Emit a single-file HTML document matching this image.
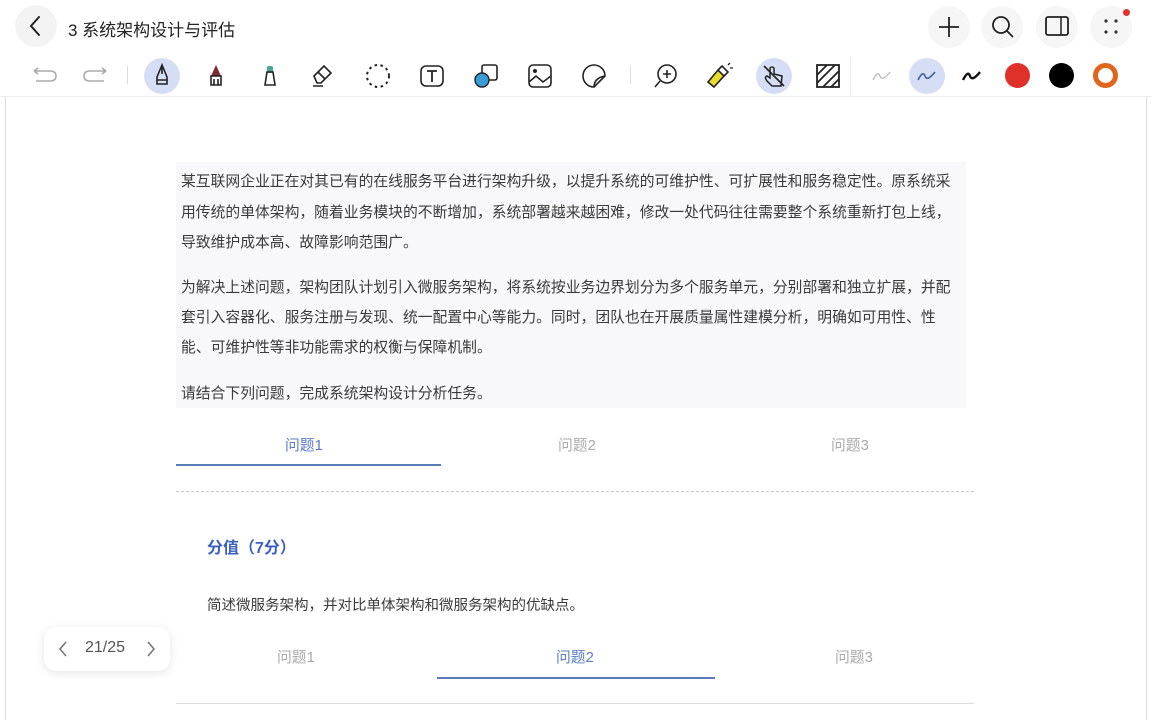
<!DOCTYPE html>
<html><head><meta charset="utf-8"><style>
*{margin:0;padding:0;box-sizing:border-box}
body{width:1152px;height:720px;overflow:hidden;background:#fff;font-family:"Liberation Sans","Noto Sans CJK SC",sans-serif;position:relative;color:#333}
.abs{position:absolute}
.circ{position:absolute;border-radius:50%;background:#f0f0f2}
.t{position:absolute;white-space:nowrap;font-size:14.8px;color:#3a3a3a}
svg{position:absolute}
</style></head><body>
<div class="circ" style="left:15px;top:5px;width:42px;height:42px;background:#f3f3f4"></div>
<svg style="left:26px;top:14px" width="20" height="24"><path d="M13 3 L5 12 L13 21" fill="none" stroke="#222" stroke-width="2" stroke-linecap="round"/></svg>
<div class="t" style="left:68px;top:16px;font-size:17px;color:#222">3 系统架构设计与评估</div>
<div class="circ" style="left:928px;top:6px;width:42px;height:42px;background:#f6f6f6"></div>
<div class="circ" style="left:981px;top:6px;width:42px;height:42px;background:#f6f6f6"></div>
<div class="circ" style="left:1036px;top:6px;width:42px;height:42px;background:#f6f6f6"></div>
<div class="circ" style="left:1090px;top:6px;width:42px;height:42px;background:#f6f6f6"></div>
<svg style="left:937px;top:15px" width="24" height="24"><path d="M12 2V22M2 12H22" stroke="#222" stroke-width="1.8"/></svg>
<svg style="left:990px;top:14px" width="26" height="26"><circle cx="11" cy="11" r="8" fill="none" stroke="#222" stroke-width="1.8"/><path d="M17 17L23 23" stroke="#222" stroke-width="1.8"/></svg>
<svg style="left:1044px;top:15px" width="28" height="24"><rect x="2" y="2" width="22" height="18" rx="2" fill="none" stroke="#222" stroke-width="1.8"/><path d="M17 2V20" stroke="#222" stroke-width="1.5"/></svg>
<svg style="left:1100px;top:15px" width="24" height="24"><circle cx="6" cy="6" r="1.6" fill="#333"/><circle cx="16" cy="6" r="1.6" fill="#333"/><circle cx="6" cy="17" r="1.6" fill="#333"/><circle cx="16" cy="17" r="1.6" fill="#333"/></svg>
<div class="abs" style="left:1123px;top:9px;width:7px;height:7px;border-radius:50%;background:#e03030"></div>
<div class="abs" style="left:0;top:55px;width:1152px;height:42px;border-bottom:1px solid #eee"></div>
<svg style="left:30px;top:66px" width="80" height="20"><path d="M4 5H20Q26 5 26 10Q26 15 20 15H6M4 5L8 2M4 5L8 8" fill="none" stroke="#aaa" stroke-width="1.5"/><path d="M76 5H60Q54 5 54 10Q54 15 60 15H74M76 5L72 2M76 5L72 8" fill="none" stroke="#aaa" stroke-width="1.5"/></svg>
<div class="abs" style="left:127px;top:66px;width:1px;height:18px;background:#ddd"></div>
<div class="circ" style="left:144px;top:58px;width:36px;height:36px;background:#d5def5"></div>
<svg style="left:150px;top:62px" width="24" height="28"><path d="M12 3L7 15V22H17V15Z M7 18H17 M12 3V12" fill="none" stroke="#222" stroke-width="1.6"/></svg>
<svg style="left:204px;top:62px" width="24" height="28"><path d="M12 3L7 14H17Z" fill="#7a2a30"/><path d="M7 14V23H17V14Z M10 17V23M14 17V23" fill="none" stroke="#222" stroke-width="1.6"/></svg>
<svg style="left:258px;top:62px" width="24" height="28"><rect x="9" y="4" width="6" height="7" rx="2" fill="#4aa592"/><path d="M9 10L7 23H17L15 10Z" fill="none" stroke="#222" stroke-width="1.6"/></svg>
<svg style="left:308px;top:62px" width="28" height="28"><path d="M6 14L16 4L23 11L13 21H9Z M10 10L17 17 M5 24H15" fill="none" stroke="#222" stroke-width="1.6"/></svg>
<svg style="left:364px;top:62px" width="28" height="28"><circle cx="14" cy="14" r="11" fill="none" stroke="#222" stroke-width="2" stroke-dasharray="2.5 3.5"/></svg>
<svg style="left:418px;top:62px" width="28" height="28"><rect x="3" y="4" width="22" height="20" rx="5" fill="none" stroke="#222" stroke-width="1.6"/><path d="M9 9H19M14 9V20" stroke="#222" stroke-width="1.8"/></svg>
<svg style="left:472px;top:62px" width="28" height="28"><rect x="10" y="3" width="15" height="15" rx="2" fill="none" stroke="#222" stroke-width="1.6"/><circle cx="10" cy="18" r="7" fill="#3b9bd4" stroke="#222" stroke-width="1.4"/></svg>
<svg style="left:526px;top:62px" width="28" height="28"><rect x="3" y="3" width="22" height="22" rx="4" fill="none" stroke="#222" stroke-width="1.6"/><circle cx="9" cy="9" r="2" fill="#222"/><path d="M3 20L10 14L17 20L25 14" fill="none" stroke="#222" stroke-width="1.6"/></svg>
<svg style="left:580px;top:62px" width="28" height="28"><path d="M25 14A11 11 0 1 0 14 25L25 14Z M14 25Q14 16 25 14" fill="none" stroke="#222" stroke-width="1.6"/></svg>
<div class="abs" style="left:630px;top:66px;width:1px;height:18px;background:#ddd"></div>
<svg style="left:652px;top:62px" width="28" height="28"><circle cx="15" cy="12" r="9" fill="none" stroke="#222" stroke-width="1.6"/><path d="M15 8V16M11 12H19M8 19L3 25" stroke="#222" stroke-width="1.6"/></svg>
<svg style="left:704px;top:62px" width="30" height="28"><path d="M4 20L14 8L20 14L10 25Z" fill="#e8dc2c" stroke="#222" stroke-width="1.6"/><path d="M14 8L18 4L24 10L20 14" fill="none" stroke="#222" stroke-width="1.6"/><path d="M24 3L26 1M26 6L29 6" stroke="#222" stroke-width="1.3"/></svg>
<div class="circ" style="left:756px;top:58px;width:36px;height:36px;background:#d5def5"></div>
<svg style="left:760px;top:62px" width="28" height="28"><path d="M10 6V16L7 14Q4 15 7 19L12 24H21L22 14L14 12V6Q12 4 10 6Z" fill="none" stroke="#222" stroke-width="1.5"/><path d="M4 4L24 24" stroke="#222" stroke-width="1.6"/></svg>
<svg style="left:814px;top:62px" width="28" height="28"><rect x="3" y="3" width="22" height="22" fill="none" stroke="#222" stroke-width="1.8"/><path d="M3 13L13 3M3 21L21 3M9 25L25 9M17 25L25 17" stroke="#222" stroke-width="1.8"/></svg>
<div class="abs" style="left:850px;top:57px;width:1px;height:38px;background:#eee"></div>
<svg style="left:870px;top:66px" width="24" height="20"><path d="M3 14Q8 4 10 10Q12 16 20 6" fill="none" stroke="#bbb" stroke-width="1.3"/></svg>
<div class="circ" style="left:909px;top:58px;width:36px;height:36px;background:#d5def5"></div>
<svg style="left:915px;top:66px" width="24" height="20"><path d="M3 14Q8 4 10 10Q12 16 20 6" fill="none" stroke="#4060a0" stroke-width="1.6"/></svg>
<svg style="left:960px;top:66px" width="24" height="20"><path d="M3 14Q8 4 10 10Q12 16 20 6" fill="none" stroke="#111" stroke-width="2.4"/></svg>
<div class="abs" style="left:1005px;top:63px;width:25px;height:25px;border-radius:50%;background:#e0302a"></div>
<div class="abs" style="left:1049px;top:63px;width:25px;height:25px;border-radius:50%;background:#000"></div>
<div class="abs" style="left:1093px;top:63px;width:25px;height:25px;border-radius:50%;border:5px solid #e0661c"></div>
<div class="abs" style="left:5px;top:97px;width:1px;height:623px;background:#ddd"></div>
<div class="abs" style="left:1146px;top:97px;width:1px;height:623px;background:#ddd"></div>
<div class="abs" style="left:176px;top:162px;width:790px;height:246px;background:#f8f8fb"></div>
<div class="t" style="left:181px;top:170px">某互联网企业正在对其已有的在线服务平台进行架构升级，以提升系统的可维护性、可扩展性和服务稳定性。原系统采</div>
<div class="t" style="left:181px;top:201px">用传统的单体架构，随着业务模块的不断增加，系统部署越来越困难，修改一处代码往往需要整个系统重新打包上线，</div>
<div class="t" style="left:181px;top:231px">导致维护成本高、故障影响范围广。</div>
<div class="t" style="left:181px;top:276px">为解决上述问题，架构团队计划引入微服务架构，将系统按业务边界划分为多个服务单元，分别部署和独立扩展，并配</div>
<div class="t" style="left:181px;top:306px">套引入容器化、服务注册与发现、统一配置中心等能力。同时，团队也在开展质量属性建模分析，明确如可用性、性</div>
<div class="t" style="left:181px;top:336px">能、可维护性等非功能需求的权衡与保障机制。</div>
<div class="t" style="left:181px;top:382px">请结合下列问题，完成系统架构设计分析任务。</div>
<div class="t" style="left:285px;top:434px;color:#5b7cc4">问题1</div>
<div class="t" style="left:558px;top:434px;color:#aaa">问题2</div>
<div class="t" style="left:831px;top:434px;color:#aaa">问题3</div>
<div class="abs" style="left:176px;top:464px;width:265px;height:2px;background:#5b7cb4"></div>
<div class="abs" style="left:176px;top:491px;width:798px;border-top:1px dashed #ccc"></div>
<div class="t" style="left:207px;top:534px;font-size:16px;font-weight:bold;color:#3a5fbf">分值（7分）</div>
<div class="t" style="left:207px;top:594px;font-size:14.5px">简述微服务架构，并对比单体架构和微服务架构的优缺点。</div>
<div class="t" style="left:277px;top:646px;color:#aaa">问题1</div>
<div class="t" style="left:556px;top:646px;color:#5b7cc4">问题2</div>
<div class="t" style="left:835px;top:646px;color:#aaa">问题3</div>
<div class="abs" style="left:437px;top:677px;width:278px;height:2px;background:#5b7cb4"></div>
<div class="abs" style="left:176px;top:703px;width:798px;height:1px;background:#ddd"></div>
<div class="abs" style="left:44px;top:627px;width:126px;height:44px;border-radius:12px;background:#fff;box-shadow:0 2px 10px rgba(0,0,0,0.1)"></div>
<svg style="left:56px;top:640px" width="14" height="18"><path d="M10 2L4 9L10 16" fill="none" stroke="#777" stroke-width="1.6"/></svg>
<div class="t" style="left:85px;top:639px;font-size:16px;color:#555">21/25</div>
<svg style="left:144px;top:640px" width="14" height="18"><path d="M4 2L10 9L4 16" fill="none" stroke="#777" stroke-width="1.6"/></svg>
</body></html>
